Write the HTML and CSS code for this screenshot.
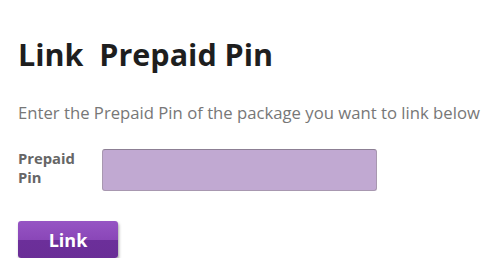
FILE: index.html
```
<!DOCTYPE html>
<html lang="en">
<head>
    <meta charset="UTF-8">
    <meta name="viewport" content="width=device-width, initial-scale=1.0">
    <title>Link Prepaid Pin</title>
    <link rel="stylesheet" href="styles.css">
</head>
<body>
    <div class="container">
        <h1>Link &nbsp;Prepaid Pin</h1>
        <p class="intro">Enter the Prepaid Pin of the package you want to link below</p>
        <form id="linkForm">
            <div class="form-group">
                <label for="prepaidPin">Prepaid<br>Pin</label>
                <input type="text" id="prepaidPin">
            </div>
            <button type="submit" class="link-btn">Link</button>
        </form>
    </div>
</body>
</html>
```
FILE: styles.css
```
body {
    font-family: "Open Sans", Arial, sans-serif;
    background-color: #fff;
    color: #222;
    margin: 0;
    padding: 0;
}
.container {
    padding: 34px 0 0 18px;
}
h1 {
    font-size: 30.5px;
    font-weight: bold;
    margin: 0;
    line-height: 40px;
    color: #1e1e1e;
}
.intro {
    font-size: 16.7px;
    color: #777;
    margin: 27px 0 0 0;
    line-height: 24px;
    white-space: nowrap;
}
.form-group {
    display: flex;
    align-items: flex-start;
    margin-top: 24px;
}
label {
    width: 84px;
    font-size: 14.8px;
    font-weight: bold;
    color: #666;
    line-height: 19px;
    padding-top: 0;
}
input[type="text"] {
    width: 275px;
    height: 42px;
    box-sizing: border-box;
    background: #c1a9d2;
    border: 1px solid #a898b0;
    border-top-color: #8c7f94;
    border-radius: 3px;
    margin-top: 0;
}
.link-btn {
    margin-top: 30px;
    width: 100px;
    height: 37px;
    border: none;
    border-radius: 3px;
    background: linear-gradient(to bottom, #9654c4 0%, #8a47b8 50%, #6c2f9a 52%, #6a2e97 100%);
    color: #fff;
    font-family: "Open Sans", Arial, sans-serif;
    font-size: 18px;
    font-weight: bold;
    cursor: pointer;
    box-shadow: 1px 2px 3px rgba(0, 0, 0, 0.35);
}
.link-btn:hover {
    background: #6a2e97;
}
```
